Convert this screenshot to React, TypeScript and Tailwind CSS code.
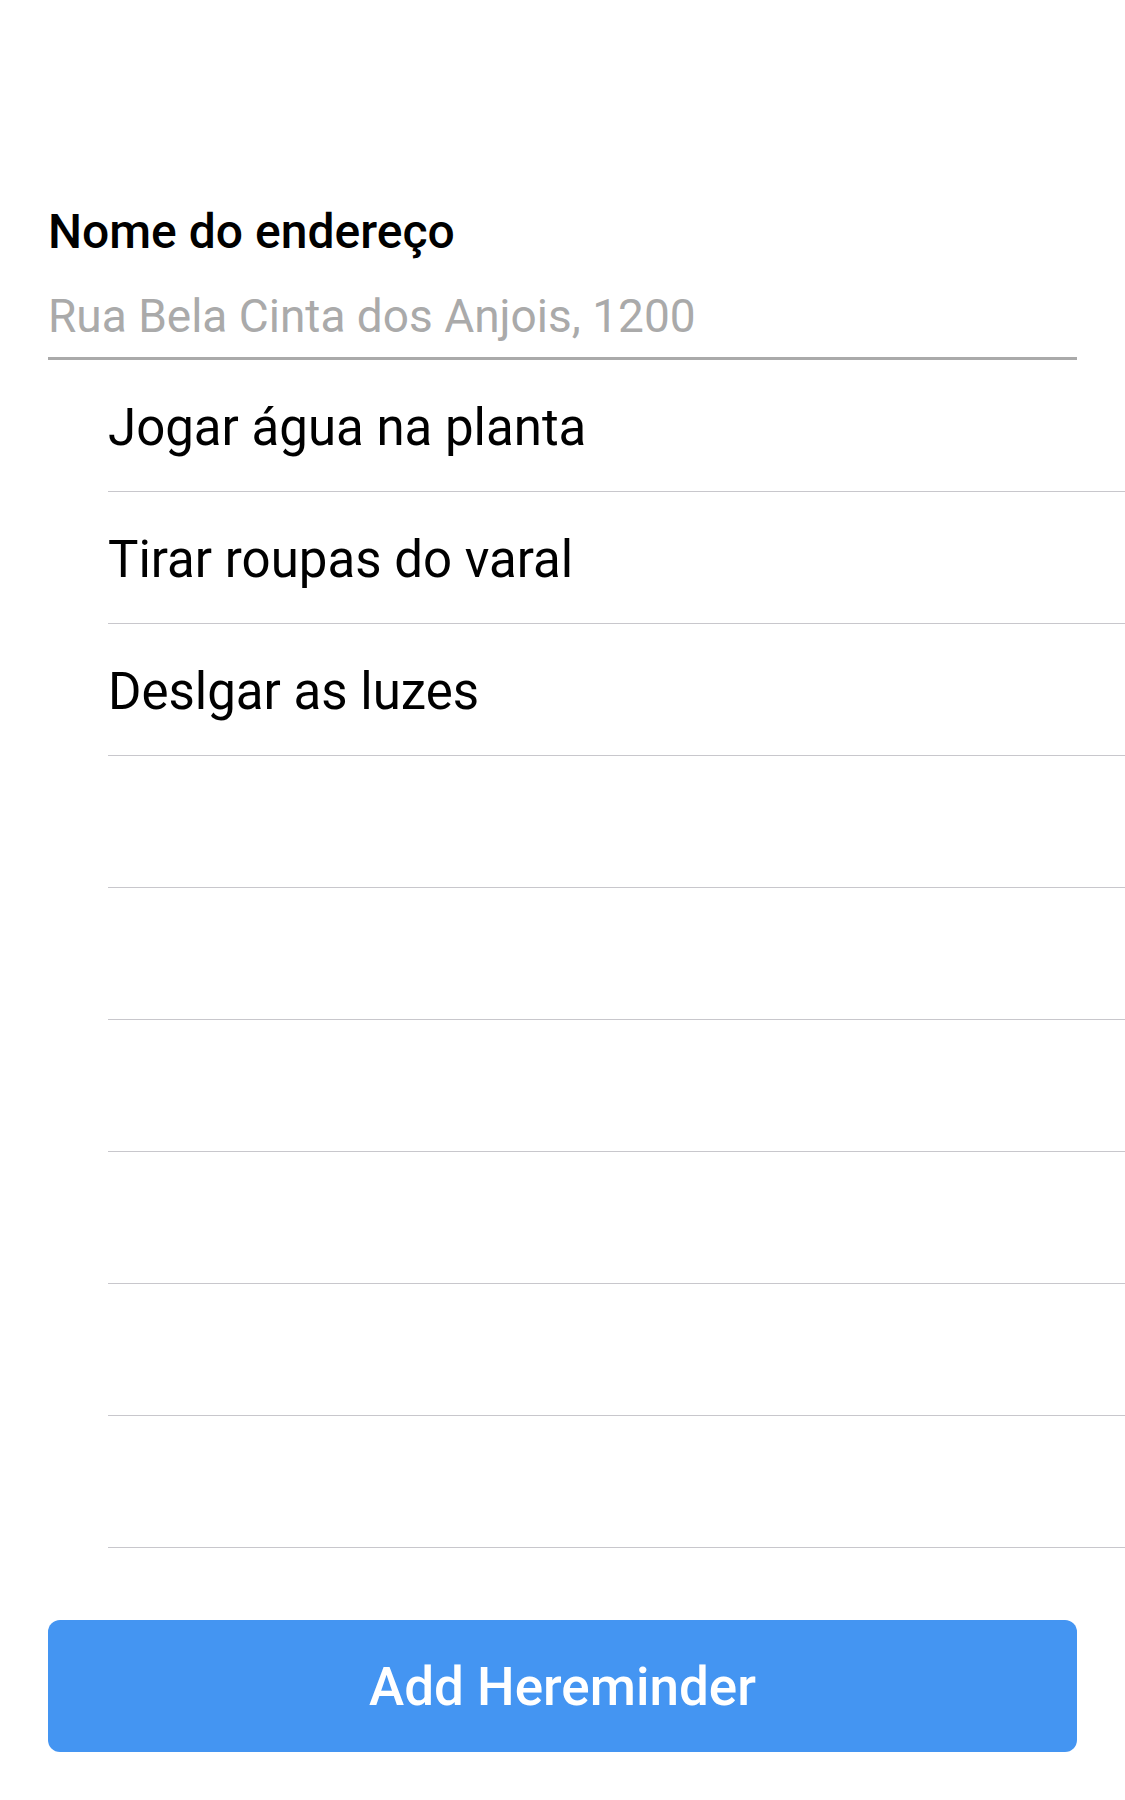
import React from 'react';

const reminders = ['Jogar água na planta', 'Tirar roupas do varal', 'Deslgar as luzes', '', '', '', '', '', ''];

export default function App() {
  return (
    <div className="w-[1125px] h-[1800px] bg-white flex flex-col font-['Roboto','Liberation_Sans',sans-serif] text-black">
      {/* Endereço */}
      <div className="px-[48px] pt-[205px]">
        <div className="h-[54px] flex items-center text-[48px] font-medium leading-none">Nome do endereço</div>
        <input
          className="mt-[30px] w-full h-[54px] pb-0 text-[46px] leading-none outline-none placeholder:text-[#aaaaaa]"
          placeholder="Rua Bela Cinta dos Anjois, 1200"
        />
        <div className="mt-[14px] h-[3px] bg-[#aaaaaa]" />
      </div>

      {/* Lista */}
      <div className="ml-[108px] flex flex-col">
        {reminders.map((item, i) => (
          <div key={i} className="h-[132px] pt-[4px] flex items-center border-b border-[#c8c7cc] text-[51px] leading-none">
            {item}
          </div>
        ))}
      </div>

      {/* Botão */}
      <div className="px-[48px] mt-[72px]">
        <button className="w-full h-[132px] pt-[4px] rounded-[12px] bg-[#4495f2] text-white text-[53px] font-medium flex items-center justify-center">
          Add Hereminder
        </button>
      </div>
    </div>
  );
}
